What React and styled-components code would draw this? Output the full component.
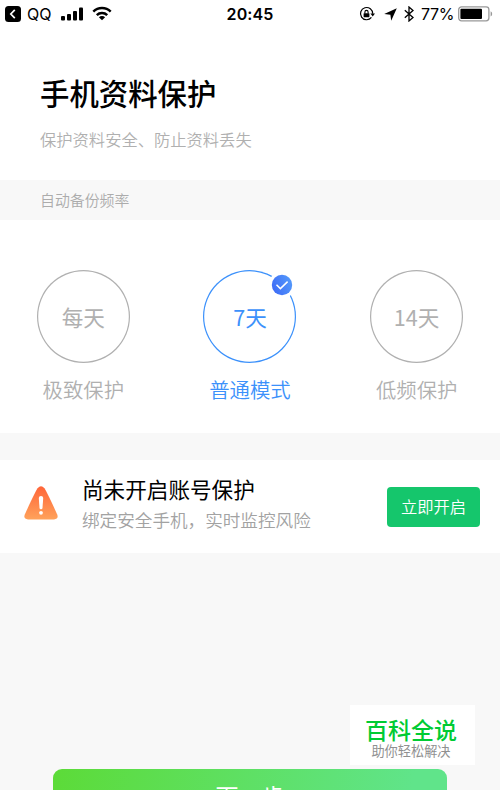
import styled, { createGlobalStyle } from "styled-components";

const options = [
  { id: 1, value: "每天", name: "极致保护" },
  { id: 2, value: "7天", name: "普通模式", selected: true },
  { id: 3, value: "14天", name: "低频保护" },
];

export default function App() {
  return (
    <Page>
      <GlobalStyle />
      <StatusBar />

      <Header>
        <h1>手机资料保护</h1>
        <p>保护资料安全、防止资料丢失</p>
      </Header>

      <SectionTitle>自动备份频率</SectionTitle>

      <Options>
        {options.map((o) => (
          <Option key={o.id} $selected={o.selected}>
            <Circle>
              <span>{o.value}</span>
              {o.selected && <CheckBadge />}
            </Circle>
            <OptionName>{o.name}</OptionName>
          </Option>
        ))}
      </Options>

      <Account>
        <WarningIcon />
        <AccountText>
          <h2>尚未开启账号保护</h2>
          <p>绑定安全手机，实时监控风险</p>
        </AccountText>
        <OpenButton>立即开启</OpenButton>
      </Account>

      <Footer>
        <NextButton>下一步</NextButton>
        <Watermark>
          <strong>百科全说</strong>
          <span>助你轻松解决</span>
        </Watermark>
      </Footer>
    </Page>
  );
}

function StatusBar() {
  return (
    <Bar>
      <BarLeft>
        <svg width="16" height="16" viewBox="0 0 16 16">
          <rect width="16" height="16" rx="3.5" fill="#000" />
          <path d="M9.8 3.8 5.8 8l4 4.2" fill="none" stroke="#fff" strokeWidth="1.7" />
        </svg>
        <Carrier>QQ</Carrier>
        <Signal width="22" height="14" viewBox="0 0 22 14">
          <rect x="0" y="9" width="4" height="4.5" rx="1" />
          <rect x="6" y="7" width="4" height="6.5" rx="1" />
          <rect x="12" y="4" width="4" height="9.5" rx="1" />
          <rect x="18" y="0.5" width="4" height="13" rx="1" />
        </Signal>
        <Wifi width="20" height="15" viewBox="0 0 20 15">
          <g fill="none" stroke="#000" strokeWidth="2.5">
            <path d="M1.3 5.6a12.4 12.4 0 0 1 17.4 0" />
            <path d="M4.8 9.1a7.4 7.4 0 0 1 10.4 0" />
          </g>
          <path d="M6.9 11.2a4.4 4.4 0 0 1 6.2 0L10 14.3z" />
        </Wifi>
      </BarLeft>
      <Time>20:45</Time>
      <BarRight>
        <svg width="16" height="16" viewBox="0 0 16 16">
          <path d="M12.4 11.4A6.1 6.1 0 1 1 13.7 7.8" fill="none" stroke="#000" strokeWidth="1.2" />
          <path d="M11.4 7.4H16l-2.3 3z" />
          <rect x="4.6" y="7.2" width="5.8" height="4" rx="0.6" />
          <path d="M5.9 7.4V6a1.6 1.6 0 0 1 3.2 0v1.4" fill="none" stroke="#000" strokeWidth="1.1" />
        </svg>
        <Arrow width="13" height="13" viewBox="0 0 13 13">
          <path d="M12.8.2 7.2 12.8 6.4 6.7.2 5.9z" />
        </Arrow>
        <Bluetooth width="10" height="16" viewBox="0 0 10 16">
          <path d="M.8 4.3 9 11.6 5 15V1l4 3.4L.8 11.7" fill="none" stroke="#000" strokeWidth="1.3" />
        </Bluetooth>
        <Percent>77%</Percent>
        <svg width="35" height="16" viewBox="0 0 35 16">
          <rect x=".7" y=".9" width="30.2" height="14" rx="2.8" fill="none" stroke="#999" strokeWidth="1.3" />
          <rect x="2.4" y="2.7" width="21.6" height="10.4" rx="1" />
          <path d="M32.6 5.3q1.6.7 1.6 2.6t-1.6 2.6z" fill="#999" />
        </svg>
      </BarRight>
    </Bar>
  );
}

function CheckBadge() {
  return (
    <Badge viewBox="0 0 28 28">
      <defs>
        <linearGradient id="badge" x1="0" y1="0.7" x2="1" y2="0.3">
          <stop offset="0" stopColor="#3e6bf6" />
          <stop offset="1" stopColor="#5399fb" />
        </linearGradient>
      </defs>
      <circle cx="14" cy="14" r="13.5" fill="#fff" />
      <circle cx="14" cy="14" r="10.2" fill="url(#badge)" />
      <path d="M8.5 13.8l3.9 3.8 7.2-7" fill="none" stroke="#fff" strokeWidth="1.5" />
    </Badge>
  );
}

function WarningIcon() {
  return (
    <svg width="34" height="34" viewBox="0 0 34 34">
      <defs>
        <linearGradient id="warning" x1="0" y1="0" x2="0" y2="1">
          <stop offset="0" stopColor="#ff6538" />
          <stop offset="1" stopColor="#ffa25b" />
        </linearGradient>
      </defs>
      <path
        d="M13.6 2.3q3.4-4.2 6.8 0Q23 6 33.2 28.5q1.6 4.7-3.2 4.9H4Q-.8 33.2.8 28.5 11 6 13.6 2.3z"
        fill="url(#warning)"
      />
      <path d="M14.8 11.9q0-2 2.2-2t2.2 2l-.7 10q-.1 1.3-1.5 1.3t-1.5-1.3z" fill="#fff" />
      <circle cx="17" cy="26.8" r="1.9" fill="#fff" />
    </svg>
  );
}

const GlobalStyle = createGlobalStyle`
  * {
    box-sizing: border-box;
    margin: 0;
  }
  body {
    overflow: hidden;
    font-family: "Noto Sans CJK SC", sans-serif;
    background-color: #f8f8f8;
  }
  svg {
    display: block;
    flex-shrink: 0;
  }
`;

const Page = styled.div`
  width: 500px;
  height: 790px;
  overflow: hidden;
  display: flex;
  flex-direction: column;
  background-color: #f8f8f8;
`;

const Bar = styled.div`
  height: 28px;
  padding: 0 7px 0 5px;
  display: grid;
  grid-template-columns: 1fr auto 1fr;
  align-items: center;
  flex-shrink: 0;
  background-color: white;
  font-family: Inter, sans-serif;
  color: black;
`;

const BarLeft = styled.div`
  display: flex;
  align-items: center;
`;

const BarRight = styled.div`
  display: flex;
  align-items: center;
  justify-content: flex-end;
`;

const Carrier = styled.span`
  width: 25px;
  margin-left: 6px;
  font-size: 16px;
`;

const Signal = styled.svg`
  margin: -1px 9px 0 9px;
`;

const Wifi = styled.svg`
  margin-top: -2px;
`;

const Time = styled.span`
  padding-left: 2px;
  font-size: 16px;
  font-weight: 600;
  letter-spacing: 0.1px;
`;

const Arrow = styled.svg`
  margin-left: 9px;
`;

const Bluetooth = styled.svg`
  margin-left: 7px;
`;

const Percent = styled.span`
  width: 33px;
  margin: 0 4px 0 7px;
  font-size: 16px;
  letter-spacing: -0.3px;
`;

const Header = styled.header`
  height: 152px;
  padding: 43px 40px 0;
  flex-shrink: 0;
  background-color: white;
  h1 {
    font-size: 29.4px;
    font-weight: 500;
    line-height: 42px;
    color: black;
  }
  p {
    margin-top: 14px;
    font-size: 16.3px;
    font-weight: 350;
    line-height: 24px;
    color: #b0b0b0;
  }
`;

const SectionTitle = styled.div`
  height: 40px;
  padding-left: 40px;
  flex-shrink: 0;
  font-size: 14.9px;
  font-weight: 350;
  line-height: 39px;
  color: #acacac;
`;

const Options = styled.div`
  height: 213px;
  padding-top: 50px;
  display: grid;
  grid-template-columns: repeat(3, 1fr);
  flex-shrink: 0;
  background-color: white;
`;

const Option = styled.div`
  display: flex;
  flex-direction: column;
  align-items: center;
  color: ${(props) => (props.$selected ? "#3c91fb" : "#b0b0b0")};
`;

const Circle = styled.div`
  position: relative;
  width: 93px;
  height: 93px;
  box-shadow: inset 0 0 0 1.2px currentColor;
  border-radius: 50%;
  display: flex;
  align-items: center;
  justify-content: center;
  font-size: 21.6px;
`;

const Badge = styled.svg`
  position: absolute;
  top: 1px;
  right: 0;
  width: 28px;
  height: 28px;
`;

const OptionName = styled.span`
  margin-top: 11px;
  font-size: 20.4px;
  font-weight: 350;
  line-height: 30px;
`;

const Account = styled.div`
  height: 93px;
  margin-top: 27px;
  padding: 0 20px 0 24px;
  display: flex;
  align-items: center;
  flex-shrink: 0;
  background-color: white;
  svg {
    margin-top: -7px;
  }
`;

const AccountText = styled.div`
  flex: 1;
  margin: -6px 0 0 24px;
  white-space: nowrap;
  h2 {
    font-size: 21.6px;
    font-weight: 400;
    line-height: 32px;
    color: black;
  }
  p {
    margin-top: 1px;
    font-size: 17.6px;
    font-weight: 350;
    line-height: 28px;
    color: #a2a2a2;
  }
`;

const OpenButton = styled.button`
  width: 93px;
  height: 40px;
  padding: 0 0 1px;
  background-color: #15c66c;
  border: none;
  border-radius: 4px;
  font-family: inherit;
  font-size: 16.3px;
  font-weight: 350;
  color: white;
`;

const Footer = styled.footer`
  position: relative;
  flex: 1;
  padding: 216px 53px 0;
`;

const NextButton = styled.button`
  width: 394px;
  height: 53px;
  padding: 0 0 2px;
  background: linear-gradient(100deg, #5cdb38, #60e48a 90%);
  border: none;
  border-radius: 9px;
  font-family: inherit;
  font-size: 23px;
  color: white;
`;

const Watermark = styled.div`
  position: absolute;
  top: 152px;
  right: 25px;
  width: 125px;
  height: 60px;
  padding: 9px 3px 0 0;
  display: flex;
  flex-direction: column;
  align-items: center;
  background-color: white;
  strong {
    font-size: 23px;
    font-weight: 500;
    line-height: 30px;
    color: #00cb33;
  }
  span {
    font-size: 13.2px;
    line-height: 14px;
    color: #909090;
  }
`;
